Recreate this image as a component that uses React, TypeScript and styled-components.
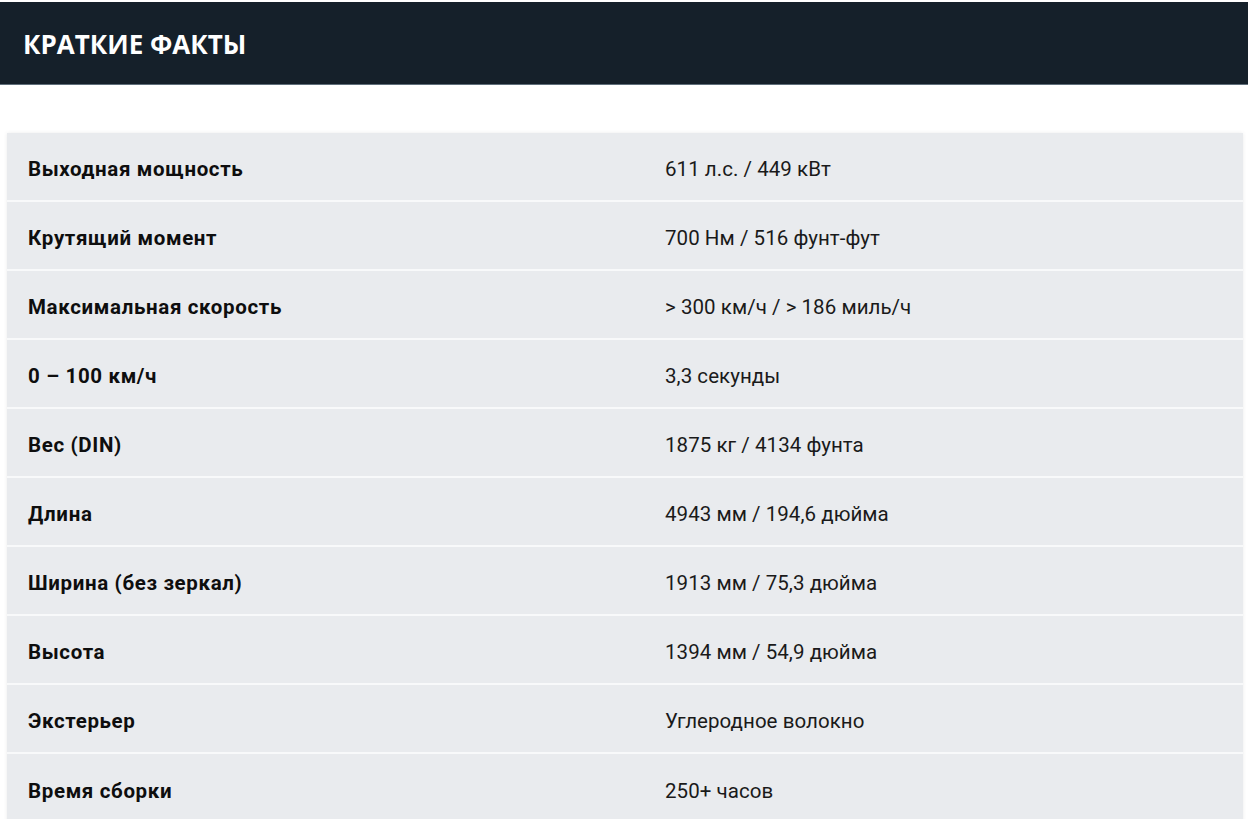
import React from "react";
import styled, { createGlobalStyle } from "styled-components";

const Global = createGlobalStyle`
  html, body { margin: 0; padding: 0; background: #ffffff; }
  body { font-family: Roboto, "Liberation Sans", sans-serif; }
`;

const Page = styled.div`
  width: 1250px;
  padding-top: 2px;
`;

const Header = styled.header`
  width: 1225px;
  height: 82px;
  background: #15202a;
  border-bottom: 1px solid #5f6e7a;
  display: flex;
  align-items: center;
  padding-left: 23px;
`;

const Title = styled.h2`
  margin: 0;
  color: #ffffff;
  font-family: "Open Sans", Roboto, sans-serif;
  font-weight: 700;
  font-size: 26px;
  padding-top: 1px;
`;

const Table = styled.div`
  margin: 48px 0 0 7px;
  width: 1236px;
  background: #e9ebee;
  box-shadow: 0 0 4px rgba(0, 0, 0, 0.08);
`;

const Row = styled.div`
  box-sizing: border-box;
  display: grid;
  grid-template-columns: 637px 1fr;
  align-items: center;
  height: 69px;
  padding: 5px 0 0 21px;
  border-bottom: 2px solid #f8f9fa;
  &:last-child { border-bottom: none; }
`;

const Label = styled.div`
  font-family: Roboto, "Liberation Sans", sans-serif;
  font-weight: 700;
  font-size: 20.5px;
  letter-spacing: 0.65px;
  color: #0e0e0e;
`;

const Value = styled.div`
  font-family: Roboto, "Liberation Sans", sans-serif;
  font-weight: 400;
  font-size: 20.5px;
  letter-spacing: 0.05px;
  color: #1a1a1a;
`;

const facts: [string, string][] = [
  ["Выходная мощность", "611 л.с. / 449 кВт"],
  ["Крутящий момент", "700 Нм / 516 фунт-фут"],
  ["Максимальная скорость", "> 300 км/ч / > 186 миль/ч"],
  ["0 – 100 км/ч", "3,3 секунды"],
  ["Вес (DIN)", "1875 кг / 4134 фунта"],
  ["Длина", "4943 мм / 194,6 дюйма"],
  ["Ширина (без зеркал)", "1913 мм / 75,3 дюйма"],
  ["Высота", "1394 мм / 54,9 дюйма"],
  ["Экстерьер", "Углеродное волокно"],
  ["Время сборки", "250+ часов"],
];

export default function App() {
  return (
    <Page>
      <Global />
      <Header>
        <Title>КРАТКИЕ ФАКТЫ</Title>
      </Header>
      <Table>
        {facts.map(([l, v]) => (
          <Row key={l}>
            <Label>{l}</Label>
            <Value>{v}</Value>
          </Row>
        ))}
      </Table>
    </Page>
  );
}
